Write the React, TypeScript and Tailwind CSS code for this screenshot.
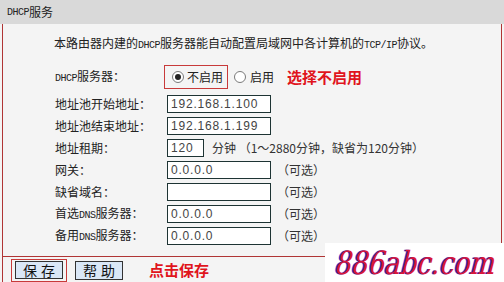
const cjk = "font-['Noto_Sans_CJK_SC','Noto_Sans',sans-serif]";

function Small({ children }: { children: React.ReactNode }) {
  return <span className="text-[10px] font-mono tracking-[-0.5px]">{children}</span>;
}

function Radio({ checked }: { checked?: boolean }) {
  return (
    <span className="flex h-[12px] w-[12px] items-center justify-center rounded-full border border-[#7a7a7a] bg-white">
      {checked && <span className="h-[6px] w-[6px] rounded-full bg-[#222]" />}
    </span>
  );
}

function Field({ value, width = "w-[104px]" }: { value: string; width?: string }) {
  return (
    <div
      className={`${width} flex h-[18px] items-center border border-[#1e3434] bg-white pl-[3px] text-[12px] leading-none tracking-[0.8px] text-[#444] font-['Liberation_Sans',sans-serif]`}
    >
      {value}
    </div>
  );
}

function Row({ label, children }: { label: React.ReactNode; children: React.ReactNode }) {
  return (
    <div className="flex h-[22px] items-center">
      <div className="w-[112px] text-[12px] leading-none text-[#222]">{label}</div>
      {children}
    </div>
  );
}

function Optional() {
  return <span className="ml-[6px] text-[12px] leading-none text-[#333]">（可选）</span>;
}

// site watermark in the bottom-right corner
function Watermark() {
  return (
    <div className="absolute bottom-0 right-0 h-[39px] w-[179px] bg-white">
      <svg width="179" height="39" viewBox="0 0 179 39">
        <g transform="translate(8 0) skewX(-14)">
          <text
            x="7"
            y="31"
            fontFamily="DejaVu Serif, Liberation Serif, serif"
            fontSize="32"
            textLength="160"
            lengthAdjust="spacingAndGlyphs"
            fill="#3a2ac0"
          >
            886abc.com
          </text>
          <text
            x="8.5"
            y="31"
            fontFamily="DejaVu Serif, Liberation Serif, serif"
            fontSize="32"
            textLength="160"
            lengthAdjust="spacingAndGlyphs"
            fill="#d8163a"
          >
            886abc.com
          </text>
        </g>
      </svg>
    </div>
  );
}

export default function App() {
  return (
    <div className={`relative h-[282px] w-[504px] overflow-hidden bg-[#f4f4f4] ${cjk}`}>
      <div className="flex h-[24px] items-center bg-[#d9d9d9] pl-[7px] text-[12px] text-[#222]">
        <Small>DHCP</Small>服务
      </div>

      <div className="ml-[2px] mr-[2px] border-l border-r border-[#b03535]">
        <p className="pl-[51px] pt-[11px] text-[12px] leading-[16px] text-[#222]">
          本路由器内建的<Small>DHCP</Small>服务器能自动配置局域网中各计算机的<Small>TCP/IP</Small>协议。
        </p>

        <div className="mt-[11px] flex h-[24px] items-center pl-[52px]">
          <div className="w-[109px] text-[12px] leading-none text-[#222]">
            <Small>DHCP</Small>服务器：
          </div>
          <div className="flex h-[24px] items-center gap-[3px] border border-[#c83a3a] pl-[7px] pr-[4px] text-[12px] text-[#222]">
            <Radio checked />
            <span>不启用</span>
          </div>
          <div className="ml-[6px] flex items-center gap-[4px] text-[12px] text-[#222]">
            <Radio />
            <span>启用</span>
          </div>
          <span className="ml-[13px] text-[15px] font-bold text-[#e0141c]">选择不启用</span>
        </div>

        <div className="mt-[4px] pl-[52px]">
          <Row label="地址池开始地址：">
            <Field value="192.168.1.100" />
          </Row>
          <Row label="地址池结束地址：">
            <Field value="192.168.1.199" />
          </Row>
          <Row label="地址租期：">
            <Field value="120" width="w-[37px]" />
            <span className="ml-[8px] text-[12px] leading-none text-[#333]">
              分钟 （1～2880分钟，缺省为120分钟）
            </span>
          </Row>
          <Row label="网关：">
            <Field value="0.0.0.0" />
            <Optional />
          </Row>
          <Row label="缺省域名：">
            <Field value="" />
            <Optional />
          </Row>
          <Row
            label={
              <>
                首选<Small>DNS</Small>服务器：
              </>
            }
          >
            <Field value="0.0.0.0" />
            <Optional />
          </Row>
          <Row
            label={
              <>
                备用<Small>DNS</Small>服务器：
              </>
            }
          >
            <Field value="0.0.0.0" />
            <Optional />
          </Row>
        </div>

        <div className="mt-[9px] flex h-[28px] items-center border-b border-t border-[#b03535] pl-[8px]">
          <div className="flex h-[23px] items-center border border-[#c83a3a] px-[3px]">
            <button className="h-[18px] w-[48px] border border-[#333] bg-[#dae7f6] pl-[4px] text-[14px] leading-none tracking-[4px] text-[#111]">
              保存
            </button>
          </div>
          <button className="ml-[8px] h-[19px] w-[48px] border border-[#333] bg-[#dae7f6] pl-[4px] text-[14px] leading-none tracking-[4px] text-[#111]">
            帮助
          </button>
          <span className="ml-[26px] text-[15px] font-bold text-[#e0141c]">点击保存</span>
        </div>
      </div>

      <Watermark />
    </div>
  );
}
